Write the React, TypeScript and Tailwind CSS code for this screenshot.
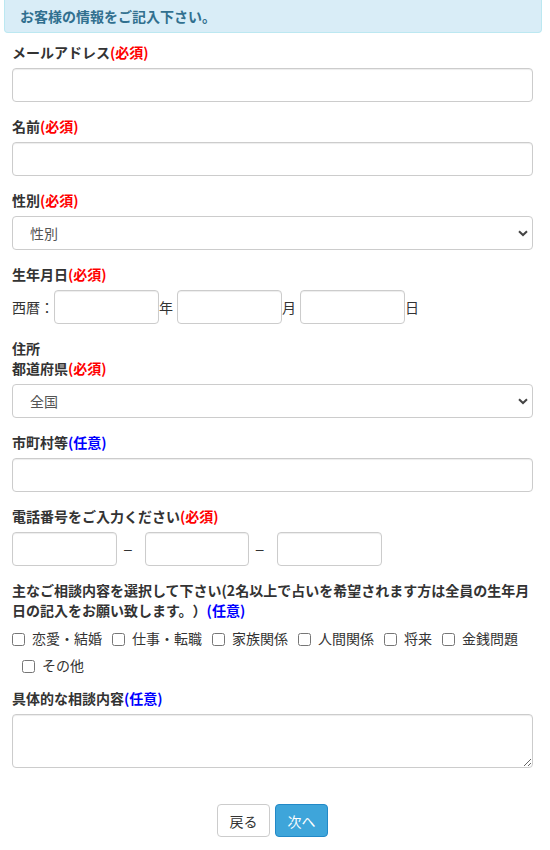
import React from "react";

const inputCls =
  "block w-full h-[34px] border border-[#ccc] rounded-[4px] bg-white px-3 text-[14px] text-[#555] shadow-[inset_0_1px_1px_rgba(0,0,0,0.075)] outline-none";

function Req() {
  return <span className="text-[#ff0000]">(必須)</span>;
}
function Opt() {
  return <span className="text-[#0000ff]">(任意)</span>;
}

function Label({ children, mb = true }: { children: React.ReactNode; mb?: boolean }) {
  return (
    <div className={"font-bold leading-[20px] text-[#333] " + (mb ? "mb-[6px]" : "")}>
      {children}
    </div>
  );
}

function Chevron() {
  return (
    <svg
      className="absolute right-[5px] top-[14px] pointer-events-none"
      width="10"
      height="7"
      viewBox="0 0 10 7"
    >
      <path d="M1 1.2 L5 5 L9 1.2" fill="none" stroke="#444" strokeWidth="2" />
    </svg>
  );
}

function Select({ value }: { value: string }) {
  return (
    <div className="relative">
      <select
        defaultValue=""
        className="block w-full h-[34px] border border-[#ccc] rounded-[4px] bg-white pl-[17px] pr-8 text-[14px] text-[#555] appearance-none outline-none"
        style={{ fontFamily: "inherit" }}
      >
        <option value="">{value}</option>
      </select>
      <Chevron />
    </div>
  );
}

const checks = ["恋愛・結婚", "仕事・転職", "家族関係", "人間関係", "将来", "金銭問題", "その他"];

export default function App() {
  return (
    <div
      className="w-[550px] min-h-[850px] bg-white text-[14px] text-[#333] [text-spacing-trim:space-all]"
      style={{ fontFamily: '"Noto Sans CJK JP", "Noto Sans", sans-serif' }}
    >
      <div className="ml-1 w-[538px] h-[33px] flex items-center pl-[15px] bg-[#d9edf7] border-x border-b border-[#bce8f1] rounded-b-[4px] text-[#31708f] font-bold leading-[20px]">
        お客様の情報をご記入下さい。
      </div>

      <div className="pl-3 w-[533px] mt-[9px]">
        <div className="mb-[14px]">
          <Label>
            メールアドレス<Req />
          </Label>
          <input type="text" className={inputCls} />
        </div>

        <div className="mb-[14px]">
          <Label>
            名前<Req />
          </Label>
          <input type="text" className={inputCls} />
        </div>

        <div className="mb-[14px]">
          <Label>
            性別<Req />
          </Label>
          <Select value="性別" />
        </div>

        <div className="mb-[14px]">
          <Label>
            生年月日<Req />
          </Label>
          <div className="flex items-center leading-[20px]">
            <span>西暦：</span>
            <input type="text" className={inputCls + " !w-[105px]"} />
            <span>年</span>
            <input type="text" className={inputCls + " !w-[105px] ml-[4px]"} />
            <span>月</span>
            <input type="text" className={inputCls + " !w-[105px] ml-[4px]"} />
            <span>日</span>
          </div>
        </div>

        <div className="mb-[14px]">
          <Label mb={false}>住所</Label>
          <Label>
            都道府県<Req />
          </Label>
          <Select value="全国" />
        </div>

        <div className="mb-[14px]">
          <Label>
            市町村等<Opt />
          </Label>
          <input type="text" className={inputCls} />
        </div>

        <div className="mb-[14px]">
          <Label>
            電話番号をご入力ください<Req />
          </Label>
          <div className="flex items-center">
            <input type="text" className={inputCls + " !w-[105px]"} />
            <span
              className="ml-[7px] mr-[13px] leading-[20px]"
              style={{ fontFamily: '"Liberation Sans", sans-serif' }}
            >
              –
            </span>
            <input type="text" className={inputCls + " !w-[104px]"} />
            <span
              className="ml-[7px] mr-[13px] leading-[20px]"
              style={{ fontFamily: '"Liberation Sans", sans-serif' }}
            >
              –
            </span>
            <input type="text" className={inputCls + " !w-[105px]"} />
          </div>
        </div>

        <div>
          <div className="font-bold leading-[20px] text-[#333] mb-[4px]">
            主なご相談内容を選択して下さい(2名以上で占いを希望されます方は全員の生年月日の記入をお願い致します。）<Opt />
          </div>
          <div className="flex flex-wrap">
            {checks.map((c, i) => (
              <label
                key={c}
                className={"flex items-center h-[27px] leading-[20px] " + (i === 0 ? "" : "ml-[10px]")}
              >
                <input type="checkbox" className="m-0 w-[13px] h-[13px] mt-[3px] mr-[7px]" />
                <span>{c}</span>
              </label>
            ))}
          </div>
        </div>

        <div className="mt-[10px]">
          <Label>
            具体的な相談内容<Opt />
          </Label>
          <textarea
            className="block w-full h-[54px] border border-[#ccc] rounded-[4px] bg-white px-3 py-[6px] text-[14px] text-[#555] shadow-[inset_0_1px_1px_rgba(0,0,0,0.075)] outline-none"
          />
        </div>

        <div className="mt-[36px] flex justify-center gap-[5px]">
          <button className="w-[53px] h-[33px] border border-[#ccc] rounded-[4px] bg-white text-[#333] text-[14px] leading-[20px]">
            戻る
          </button>
          <button className="w-[53px] h-[33px] border border-[#2289c7] rounded-[4px] bg-[#3ea5da] text-white text-[14px] leading-[20px]">
            次へ
          </button>
        </div>
      </div>
    </div>
  );
}
